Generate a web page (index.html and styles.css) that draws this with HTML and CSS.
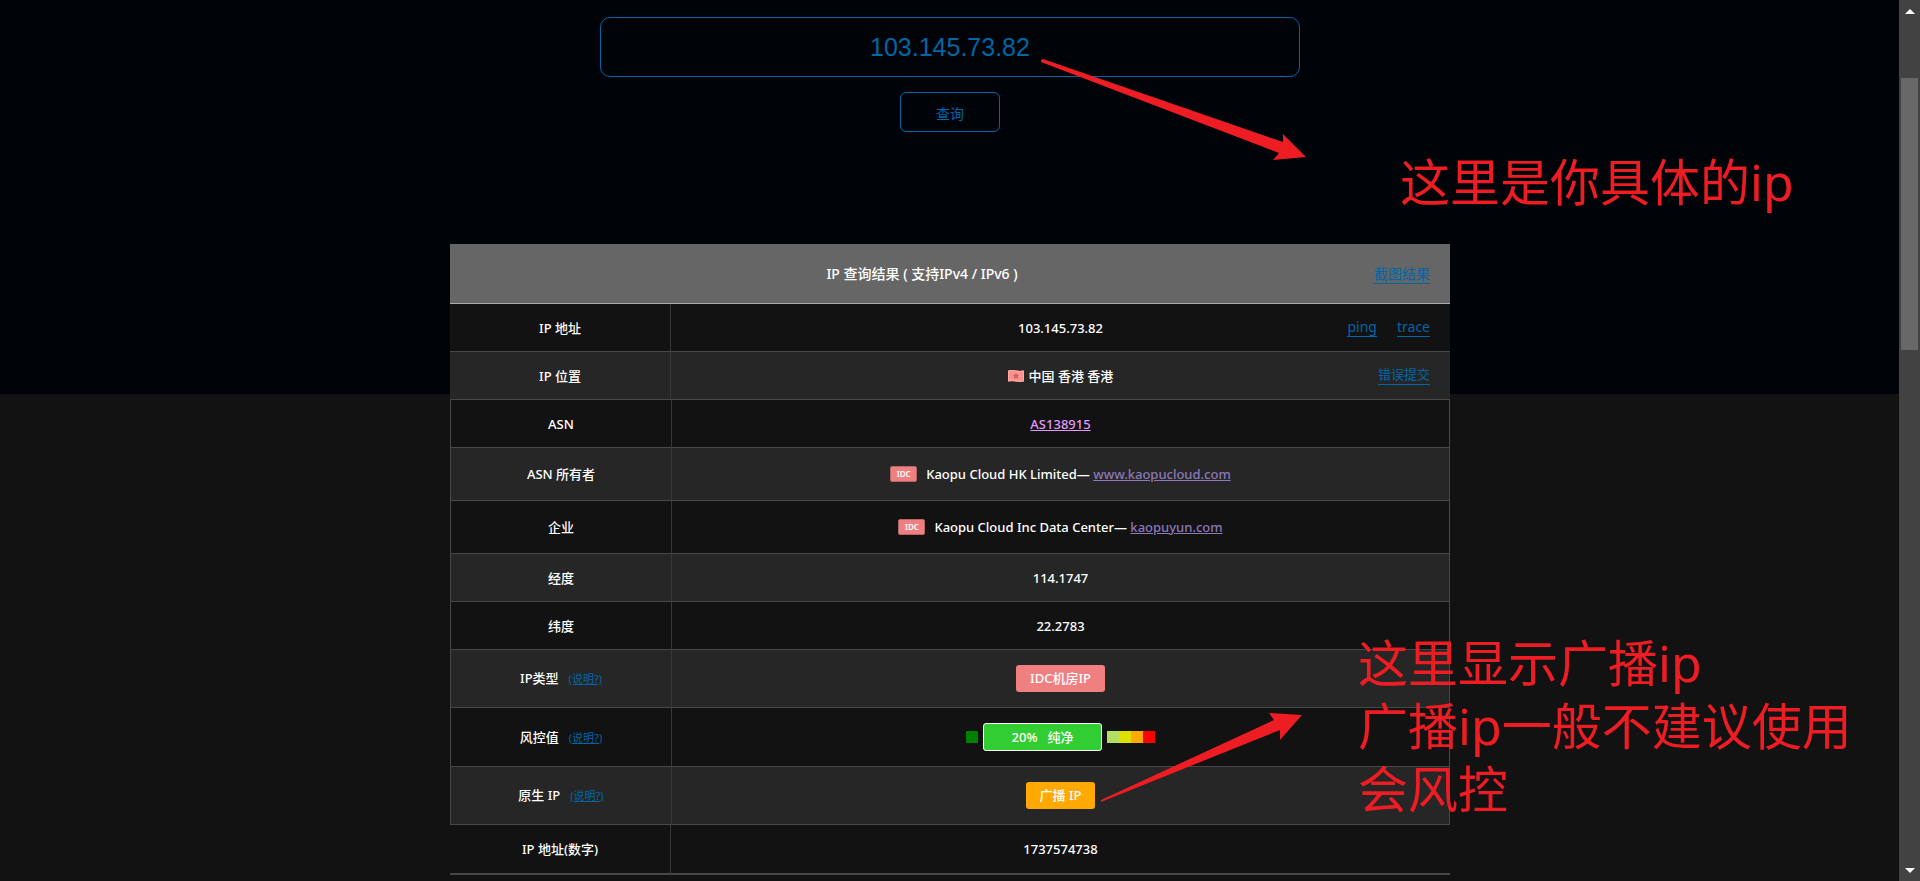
FILE: index.html
```html
<!DOCTYPE html>
<html lang="zh-CN">
<head>
<meta charset="utf-8">
<title>IP 查询结果</title>
<link rel="stylesheet" href="styles.css">
</head>
<body>
<div class="shell">
  <main class="page">
    <form class="search">
      <input class="search-input" type="text" value="103.145.73.82" aria-label="IP 地址">
      <button class="search-button" type="button">查询</button>
    </form>

    <table class="result">
      <colgroup><col class="col-name"><col></colgroup>
      <thead>
        <tr><th colspan="2"><a class="action head-action" href="#">截图结果</a>IP 查询结果 ( 支持IPv4 / IPv6 )</th></tr>
      </thead>
      <tbody class="open">
        <tr>
          <td>IP 地址</td>
          <td><div class="split"><span>103.145.73.82</span><span class="actions large"><a class="action" href="#">ping</a><a class="action" href="#">trace</a></span></div></td>
        </tr>
        <tr>
          <td>IP 位置</td>
          <td><div class="split"><span class="place"><svg class="flag" viewBox="0 0 16 12" width="16" height="12" aria-hidden="true"><path d="M0 .5Q4-.3 8 .5T16 .5V11.500Q12 12.300 8 11.500T0 11.500Z" fill="#ff8f8b"/><path d="M.5.9Q4 .2 8 1T15.500 1V11Q12 11.700 8 11T.5 11Z" fill="none" stroke="#ffaaa5"/><path d="M8 2.800L8.900 4.900 11.100 5 9.500 6.500 10 8.700 8 7.600 6 8.700 6.500 6.500 4.900 5 7.100 4.900Z" fill="#a65b4d"/><circle cx="8" cy="6" r=".8" fill="#ff8f8b"/></svg>中国 香港 香港</span><span class="actions"><a class="action" href="#">错误提交</a></span></div></td>
        </tr>
      </tbody>
      <tbody class="boxed">
        <tr><td>ASN</td><td><a class="asn" href="#">AS138915</a></td></tr>
        <tr class="medium"><td>ASN 所有者</td><td><div class="line"><span class="tag">IDC</span><span>Kaopu Cloud HK Limited— <a class="site" href="#">www.kaopucloud.com</a></span></div></td></tr>
        <tr class="medium"><td>企业</td><td><div class="line"><span class="tag">IDC</span><span>Kaopu Cloud Inc Data Center— <a class="site" href="#">kaopuyun.com</a></span></div></td></tr>
        <tr><td>经度</td><td>114.1747</td></tr>
        <tr><td>纬度</td><td>22.2783</td></tr>
        <tr class="tall"><td>IP类型<a class="help" href="#">(说明?)</a></td><td><span class="badge pink">IDC机房IP</span></td></tr>
        <tr class="tall risk-row"><td>风控值<a class="help" href="#">(说明?)</a></td><td>
          <div class="risk">
            <i class="cell green"></i>
            <span class="score"><span>20%</span><span>纯净</span></span>
            <span class="scale"><i class="cell lime"></i><i class="cell yellow"></i><i class="cell orange"></i><i class="cell red"></i></span>
          </div></td></tr>
        <tr class="tall"><td>原生 IP<a class="help" href="#">(说明?)</a></td><td><span class="badge orange">广播 IP</span></td></tr>
      </tbody>
      <tbody class="open last">
        <tr><td>IP 地址(数字)</td><td>1737574738</td></tr>
      </tbody>
    </table>
  </main>

  <div class="scrollbar" aria-hidden="true">
    <svg width="10" height="6" viewBox="0 0 10 6"><path d="M5 0L10 5H0Z" fill="#fff"/></svg>
    <div class="track"><div class="thumb"></div></div>
    <svg width="10" height="6" viewBox="0 0 10 6"><path d="M0 0H10L5 5Z" fill="#fff"/></svg>
  </div>

  <svg class="arrow arrow-ip" viewBox="0 0 268 104" width="268" height="104" aria-hidden="true"><path d="M1 1L3 0 243 83 243 75 266 98 233 101 239 94 1 3Z" fill="#ee1c23"/></svg>
  <svg class="arrow arrow-native" viewBox="0 0 204 92" width="204" height="92" aria-hidden="true"><path d="M1 88L174 8 169 1 202 3 180 28 180 18 1 90Z" fill="#ee1c23"/></svg>
  <p class="note note-ip">这里是你具体的ip</p>
  <p class="note note-native">这里显示广播ip<br>广播ip一般不建议使用<br>会风控</p>
</div>
</body>
</html>
```
FILE: styles.css
```css
* { box-sizing: border-box; }

body {
  margin: 0;
  background: #121212;
  color: #fff;
  font-family: "Noto Sans", "Noto Sans CJK SC", sans-serif;
  font-size: 13px;
  line-height: 20px;
}

.shell {
  position: relative;
  display: flex;
  height: 100vh;
  overflow: hidden;
}

.page {
  flex: 1;
  display: flex;
  flex-direction: column;
  align-items: center;
  padding: 17px 0 0 1px;
  background: linear-gradient(#000408 394px, #121212 394px);
}

.search {
  display: flex;
  flex-direction: column;
  align-items: center;
  gap: 15px;
  width: 100%;
  margin-bottom: 112px;
}

.search-input {
  width: 100%;
  max-width: 700px;
  height: 60px;
  border: 1px solid #0066a6;
  border-radius: 10px;
  background: transparent;
  color: #0066a6;
  font: 25px "Liberation Sans", sans-serif;
  text-align: center;
}

.search-button {
  width: 100px;
  height: 40px;
  padding: 1px 0 0;
  border: 1px solid #0066a6;
  border-radius: 6px;
  background: transparent;
  color: #0066a6;
  font: 14px "Noto Sans CJK SC", sans-serif;
}

.result {
  width: 100%;
  max-width: 1000px;
  table-layout: fixed;
  border-collapse: separate;
  border-spacing: 0;
  text-align: center;
  font-weight: 500;
}

.col-name { width: 221px; }

.result th {
  height: 60px;
  padding: 0 20px;
  background: #666;
  border-bottom: 1px solid #aaa;
  font-size: 14px;
  font-weight: 500;
}

.result td {
  height: 48px;
  padding: 0 20px;
  background: #121212;
  border-bottom: 1px solid #484848;
}

.open td:first-child { border-right: 1px solid #383838; }
.open tr:nth-child(2) td,
.boxed tr:nth-child(even) td { background: #262626; }
.boxed td:first-child { border-left: 1px solid #484848; }
.boxed td:last-child { border-left: 1px solid #383838; border-right: 1px solid #484848; }
.boxed .medium td { height: 53px; }
.boxed .tall td { height: 58px; }
.boxed .risk-row td { height: 59px; }
.last td { height: 50px; border-bottom: 2px solid #484848; }

a { color: #0066a6; font-weight: 400; }
.action {
  border-bottom: 1px solid #0066a6;
  text-decoration: none;
}
.head-action { float: right; line-height: 19px; }

.split {
  display: grid;
  grid-template-columns: 1fr auto 1fr;
  align-items: center;
}
.split > :first-child { grid-column: 2; }
.actions { display: flex; justify-content: flex-end; gap: 20px; padding-bottom: 2px; line-height: 19px; }
.large { font-size: 14px; }

.place { display: flex; align-items: center; gap: 5px; }

.asn { color: #e09bff; font-weight: 500; }
.site { color: #8c78ba; font-weight: 500; }

.line { display: flex; align-items: center; justify-content: center; gap: 9px; }
.tag {
  width: 27px;
  height: 16px;
  border: 1px solid #b56767;
  border-radius: 2px;
  background: #f08080;
  font-size: 8px;
  font-weight: 600;
  line-height: 14px;
}

.help { margin-left: 10px; font-size: 11px; }

.badge {
  display: inline-block;
  padding: 0 14px;
  border-radius: 3px;
  line-height: 27px;
}
.pink { background: #f08080; }
.orange { background: #ffa902; }

.risk { display: flex; align-items: center; justify-content: center; gap: 5px; }
.score {
  display: flex;
  justify-content: center;
  gap: 10px;
  width: 119px;
  border: 1px solid #fff;
  border-radius: 3px;
  background: #32cd32;
  line-height: 26px;
}
.scale { display: flex; }
.cell { width: 12px; height: 12px; }
.green { background: #008000; }
.lime { background: #b2df5f; }
.yellow { background: #dfdf00; }
.red { background: #f00; }

.scrollbar {
  display: flex;
  flex-direction: column;
  align-items: center;
  width: 21px;
  padding: 9px 2px 7px;
  background: #424242;
}
.track { flex: 1; width: 17px; padding: 63px 0; }
.thumb { height: 272px; background: #686868; }

.arrow, .note { position: absolute; }
.arrow-ip { left: 1040px; top: 59px; }
.arrow-native { left: 1100px; top: 712px; }
.note {
  margin: 0;
  color: #ee1c23;
  font-size: 50px;
  line-height: 63px;
  white-space: nowrap;
}
.note-ip { left: 1400px; top: 151px; }
.note-native { left: 1358px; top: 632px; }
```
